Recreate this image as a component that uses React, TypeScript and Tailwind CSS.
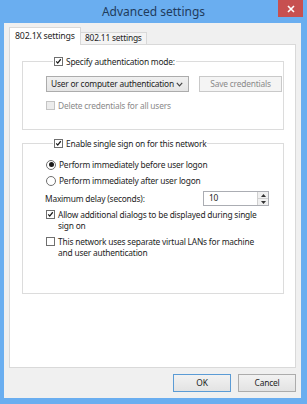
import type { ReactNode } from "react";

// Small Windows 8 style controls
function Check({ checked, disabled }: { checked?: boolean; disabled?: boolean }) {
  return (
    <span
      className={
        "shrink-0 w-[9px] h-[9px] border flex items-center justify-center " +
        (disabled ? "border-[#c4c4c4] bg-[#ececec]" : "border-[#6f6f6f] bg-white")
      }
    >
      {checked && (
        <svg width="9" height="9" viewBox="0 0 9 9">
          <path d="M1.6 4.4 L3.5 6.6 L7.4 1.6" fill="none" stroke="#1a1a1a" strokeWidth="1.6" />
        </svg>
      )}
    </span>
  );
}

function Radio({ checked }: { checked?: boolean }) {
  return (
    <span className="shrink-0 w-[10px] h-[10px] rounded-full border border-[#6f6f6f] bg-white flex items-center justify-center">
      {checked && <span className="w-[5px] h-[5px] rounded-full bg-[#1a1a1a]" />}
    </span>
  );
}

function Row({ control, children, muted }: { control: ReactNode; children: ReactNode; muted?: boolean }) {
  return (
    <div className="flex items-start gap-[3px]">
      <span className="h-[11px] flex items-center">{control}</span>
      <span className={"leading-[11px] whitespace-nowrap " + (muted ? "text-[#8a8a8a]" : "")}>{children}</span>
    </div>
  );
}

function Button({ label, focused }: { label: string; focused?: boolean }) {
  return (
    <div
      className={
        "w-[58px] h-[18px] border flex items-center justify-center bg-gradient-to-b from-[#f2f2f2] to-[#e3e3e3] " +
        (focused ? "border-[#5b9bd5]" : "border-[#acacac]")
      }
    >
      {label}
    </div>
  );
}

export default function App() {
  return (
    <div className="w-[307px] h-[404px] bg-[#6aaef0] flex flex-col overflow-hidden font-['Noto_Sans',sans-serif] text-[8.4px] tracking-[-0.2px] text-[#1e1e1e]">
      {/* Title bar */}
      <div className="relative h-[23px] shrink-0 flex items-center justify-center">
        <span className="text-[12px] tracking-normal text-[#1f3b5c] leading-none">Advanced settings</span>
        <div className="absolute top-0 right-[4px] w-[25px] h-[17px] bg-[#c75050] flex items-center justify-center">
          <svg width="8" height="8" viewBox="0 0 8 8">
            <path d="M1 1 L7 7 M7 1 L1 7" stroke="#ffffff" strokeWidth="1.6" />
          </svg>
        </div>
      </div>

      {/* Client area */}
      <div className="flex-1 ml-[4px] mr-[6px] mb-[6px] bg-[#f0f0f0] flex flex-col pt-[4px] px-[5px]">
        {/* Tabs */}
        <div className="h-[17px] flex items-end whitespace-nowrap">
          <div className="relative z-10 -mb-px w-[72px] h-[18px] bg-white border border-b-0 border-[#d9d9d9] pl-[5px] flex items-center text-[8.8px]">
            802.1X settings
          </div>
          <div className="w-[66px] h-[12px] bg-[#f4f4f4] border border-b-0 border-l-0 border-[#d9d9d9] pl-[4px] flex items-center">
            802.11 settings
          </div>
        </div>

        {/* Tab panel */}
        <div className="h-[324px] bg-white border border-[#d9d9d9] pl-[12px] pr-[11px] pt-[11px] flex flex-col">
          {/* Group 1 */}
          <fieldset className="border border-[#dcdcdc] pl-[23px] pb-[18px]">
            <legend className="ml-[7px] px-[1px]">
              <Row control={<Check checked />}>Specify authentication mode:</Row>
            </legend>
            <div className="mt-[9px] flex gap-[10px] whitespace-nowrap">
              <div className="w-[143px] h-[16px] border border-[#acacac] bg-gradient-to-b from-[#f0f0f0] to-[#e5e5e5] flex items-center pl-[4px] pr-[5px]">
                <span className="flex-1">User or computer authentication</span>
                <svg width="7" height="5" viewBox="0 0 7 5">
                  <path d="M0.8 0.8 L3.5 3.8 L6.2 0.8" fill="none" stroke="#444" strokeWidth="1.2" />
                </svg>
              </div>
              <div className="w-[83px] h-[16px] border border-[#c9c9c9] bg-[#f4f4f4] text-[#8a8a8a] flex items-center justify-center">
                Save credentials
              </div>
            </div>
            <div className="mt-[8px]">
              <Row control={<Check disabled />} muted>
                Delete credentials for all users
              </Row>
            </div>
          </fieldset>

          {/* Group 2 */}
          <fieldset className="mt-[8px] border border-[#dcdcdc] pl-[23px] pr-[14px] pb-[35px]">
            <legend className="ml-[7px] px-[1px]">
              <Row control={<Check checked />}>Enable single sign on for this network</Row>
            </legend>
            <div className="mt-[10px] flex flex-col">
              <Row control={<Radio checked />}>Perform immediately before user logon</Row>
              <div className="mt-[5px]">
                <Row control={<Radio />}>Perform immediately after user logon</Row>
              </div>
              <div className="mt-[5px] flex items-center -ml-px">
                <span className="leading-[11px]">Maximum delay (seconds):</span>
                <div className="ml-auto w-[66px] h-[15px] border border-[#abadb3] bg-white flex">
                  <span className="flex-1 pl-[5px] flex items-center">10</span>
                  <div className="w-[11px] flex flex-col border-l border-[#d0d0d0] bg-[#f0f0f0]">
                    <div className="flex-1 flex items-center justify-center border-b border-[#d0d0d0]">
                      <svg width="5" height="3" viewBox="0 0 5 3">
                        <path d="M0 3 L2.5 0 L5 3 Z" fill="#333" />
                      </svg>
                    </div>
                    <div className="flex-1 flex items-center justify-center">
                      <svg width="5" height="3" viewBox="0 0 5 3">
                        <path d="M0 0 L2.5 3 L5 0 Z" fill="#333" />
                      </svg>
                    </div>
                  </div>
                </div>
              </div>
              <div className="mt-[3px]">
                <Row control={<Check checked />}>
                  Allow additional dialogs to be displayed during single
                  <br />
                  sign on
                </Row>
              </div>
              <div className="mt-[5px]">
                <Row control={<Check />}>
                  This network uses separate virtual LANs for machine
                  <br />
                  and user authentication
                </Row>
              </div>
            </div>
          </fieldset>
        </div>

        {/* Dialog buttons */}
        <div className="mt-[6px] flex justify-end gap-[7px]">
          <Button label="OK" focused />
          <Button label="Cancel" />
        </div>
      </div>
    </div>
  );
}
